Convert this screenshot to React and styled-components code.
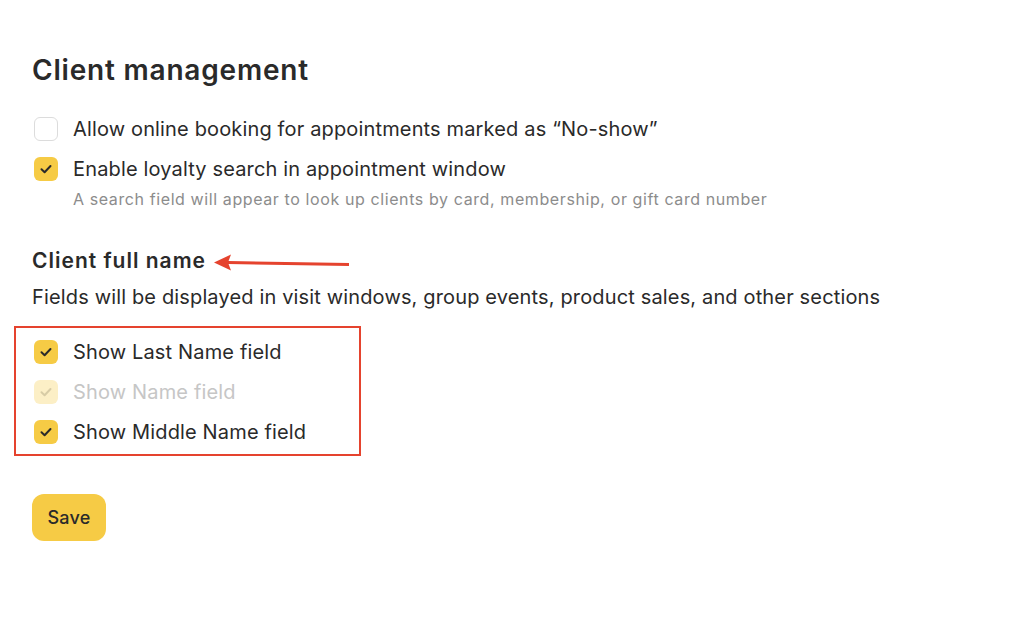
import { createGlobalStyle, styled } from "styled-components";

const GlobalStyle = createGlobalStyle`
  body {
    margin: 0;
    background: #ffffff;
    font-family: Inter, "Noto Sans", sans-serif;
    color: #2a2a2a;
  }
`;

const Page = styled.div`
  padding: 52px 32px 0 32px;
  display: flex;
  flex-direction: column;
  align-items: flex-start;
`;

const Title = styled.h1`
  margin: 0;
  font-size: 28px;
  line-height: 36px;
  font-weight: 600;
  letter-spacing: 0.8px;
`;

const CheckList = styled.div`
  display: flex;
  flex-direction: column;
  gap: 16px;
  margin-top: 29px;
`;

const Row = styled.label`
  display: flex;
  align-items: center;
  gap: 15px;
  padding-left: 2px;
  font-size: 20px;
  line-height: 24px;
  letter-spacing: 0.15px;
  color: ${(props) => (props.disabled ? "#c6c6c6" : "#2a2a2a")};
`;

const Box = styled.span`
  width: 24px;
  height: 24px;
  box-sizing: border-box;
  border-radius: 6px;
  flex-shrink: 0;
  display: flex;
  align-items: center;
  justify-content: center;
  background: ${(props) =>
    props.checked ? (props.disabled ? "#fcefc6" : "#f6cb45") : "#ffffff"};
  border: ${(props) => (props.checked ? "none" : "1px solid #dcdcdc")};
  color: ${(props) => (props.disabled ? "#d8cca6" : "#2a2a2a")};
`;

const Hint = styled.div`
  margin: 8px 0 0 41px;
  font-size: 16px;
  line-height: 20px;
  letter-spacing: 0.6px;
  color: #8c8c8c;
`;

const SectionHead = styled.div`
  display: flex;
  align-items: center;
  margin-top: 38px;
`;

const Subtitle = styled.h2`
  margin: 0;
  font-size: 21px;
  line-height: 28px;
  font-weight: 600;
  letter-spacing: 1px;
`;

const Arrow = styled.svg`
  margin-left: 8px;
  margin-top: 4px;
`;

const Description = styled.p`
  margin: 10px 0 0 0;
  font-size: 20px;
  line-height: 24px;
  letter-spacing: 0.15px;
`;

const Highlight = styled.div`
  display: flex;
  flex-direction: column;
  gap: 16px;
  width: 347px;
  box-sizing: border-box;
  margin: 17px 0 0 -18px;
  padding: 12px 16px 10px 16px;
  border: 2px solid #e5432e;
`;

const SaveButton = styled.button`
  margin-top: 38px;
  width: 74px;
  height: 47px;
  border: none;
  border-radius: 12px;
  background: #f6cb45;
  font-family: Inter, "Noto Sans", sans-serif;
  font-size: 18px;
  font-weight: 500;
  letter-spacing: 0.2px;
  color: #2a2a2a;
  cursor: pointer;
`;

function Check() {
  return (
    <svg width="14" height="14" viewBox="0 0 14 14" fill="none">
      <path
        d="M2.5 7.3L5.6 10.2L11.5 4"
        stroke="currentColor"
        strokeWidth="2"
        strokeLinecap="round"
        strokeLinejoin="round"
      />
    </svg>
  );
}

function Option({ label, checked, disabled }) {
  return (
    <Row disabled={disabled}>
      <Box checked={checked} disabled={disabled}>
        {checked && <Check />}
      </Box>
      <span>{label}</span>
    </Row>
  );
}

function App() {
  return (
    <>
      <GlobalStyle />
      <Page>
        <Title>Client management</Title>

        <CheckList>
          <Option label="Allow online booking for appointments marked as “No-show”" />
          <div>
            <Option label="Enable loyalty search in appointment window" checked />
            <Hint>
              A search field will appear to look up clients by card, membership,
              or gift card number
            </Hint>
          </div>
        </CheckList>

        <SectionHead>
          <Subtitle>Client full name</Subtitle>
          <Arrow width="137" height="18" viewBox="0 0 137 18">
            <path d="M14 8.6L135 10.6" stroke="#e5432e" strokeWidth="3" />
            <path d="M0 8.4L17 0.5L14 8.6L17 16.5Z" fill="#e5432e" />
          </Arrow>
        </SectionHead>
        <Description>
          Fields will be displayed in visit windows, group events, product
          sales, and other sections
        </Description>

        <Highlight>
          <Option label="Show Last Name field" checked />
          <Option label="Show Name field" checked disabled />
          <Option label="Show Middle Name field" checked />
        </Highlight>

        <SaveButton>Save</SaveButton>
      </Page>
    </>
  );
}

export default App;
